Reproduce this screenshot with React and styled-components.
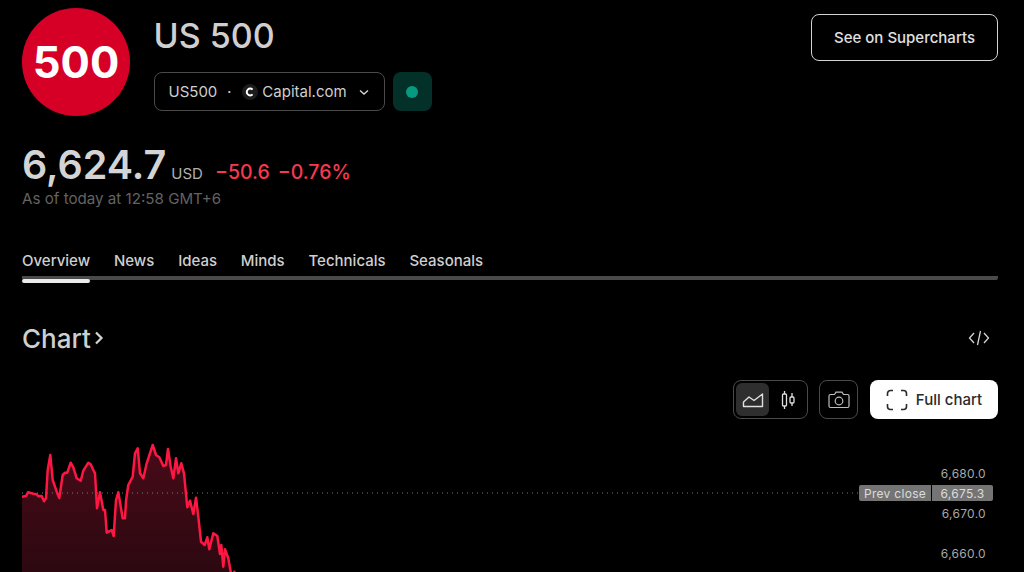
import styled, { createGlobalStyle } from 'styled-components';

const GlobalStyle = createGlobalStyle`
    html, body {
        margin: 0;
        background: #000;
        font-family: Inter, "Liberation Sans", sans-serif;
    }
    #root {
        height: 572px;
        overflow: hidden;
    }
`

const Page = styled.div`
    display: flex;
    flex-direction: column;
    padding: 8px 26px 0 22px;
    height: 564px;
    overflow: hidden;
    color: #d4d4d4;
`

const Header = styled.div`
    display: flex;
    align-items: flex-start;
    gap: 23.5px;
`

const Logo = styled.div`
    width: 108px;
    height: 108px;
    border-radius: 50%;
    background: #d60027;
    color: #fff;
    display: flex;
    align-items: center;
    justify-content: center;
    font-size: 43.5px;
    font-weight: 700;
    flex-shrink: 0;
`

const TitleColumn = styled.div`
    display: flex;
    flex-direction: column;
    flex: 1;
`

const Title = styled.h1`
    margin: 6px 0 0;
    font-size: 34px;
    line-height: 44px;
    font-weight: 500;
    color: #cfcfcf;
`

const SymbolRow = styled.div`
    display: flex;
    gap: 8px;
    margin-top: 14px;
`

const SymbolButton = styled.div`
    display: flex;
    align-items: center;
    box-sizing: border-box;
    width: 231px;
    height: 39px;
    padding: 0 14px;
    border: 1px solid #4a4a4a;
    border-radius: 8px;
    font-size: 15px;
    color: #cfcfcf;
`

const Dot = styled.span`
    margin: 0 11px 0 10px;
    font-size: 12px;
    font-weight: 700;
`

const ExchangeIcon = styled.span`
    width: 16px;
    height: 16px;
    margin-right: 4px;
    display: flex;
`

const Chevron = styled.span`
    margin-left: auto;
    display: flex;
`

const StatusBox = styled.div`
    width: 39px;
    height: 39px;
    border-radius: 8px;
    background: #04302a;
    display: flex;
    align-items: center;
    justify-content: center;
`

const StatusDot = styled.span`
    width: 12px;
    height: 12px;
    border-radius: 50%;
    background: #089981;
`

const OutlineButton = styled.div`
    box-sizing: border-box;
    width: 187px;
    height: 47px;
    margin-top: 6px;
    border: 1px solid #d4d4d4;
    border-radius: 8px;
    display: flex;
    align-items: center;
    justify-content: center;
    font-size: 15px;
    font-weight: 500;
    color: #e0e0e0;
`

const PriceRow = styled.div`
    display: flex;
    align-items: baseline;
    margin-top: 24px;
    height: 50px;
`

const Price = styled.span`
    font-size: 39.5px;
    line-height: 50px;
    font-weight: 600;
    color: #d4d4d4;
`

const Currency = styled.span`
    margin-left: 5px;
    font-size: 15px;
    color: #b0b0b0;
`

const Change = styled.span`
    margin-left: ${props => props.$gap}px;
    font-size: 19.5px;
    font-weight: 500;
    color: #f7394f;
`

const AsOf = styled.div`
    font-size: 15.15px;
    line-height: 20px;
    margin-top: -1px;
    color: #636363;
`

const Tabs = styled.div`
    display: flex;
    gap: 23.8px;
    margin-top: 40px;
    height: 30px;
    border-bottom: 4px solid #4a4a4a;
    border-radius: 2px;
`

const Tab = styled.div`
    position: relative;
    font-size: 15px;
    font-weight: 500;
    line-height: 24px;
    color: #cfcfcf;

    &::after {
        content: "";
        display: ${props => (props.$active ? 'block' : 'none')};
        position: absolute;
        left: 0;
        right: 0;
        top: 30px;
        height: 4px;
        border-radius: 2px;
        background: #ebebeb;
    }
`

const SectionHead = styled.div`
    display: flex;
    align-items: center;
    justify-content: space-between;
    margin-top: 41px;
    height: 40px;
`

const SectionTitle = styled.h2`
    display: flex;
    align-items: center;
    gap: 3px;
    margin: 0;
    font-size: 26px;
    font-weight: 500;
    color: #cfcfcf;
`

const EmbedIcon = styled.span`
    display: flex;
    margin-right: 8px;
`

const Toolbar = styled.div`
    display: flex;
    justify-content: flex-end;
    gap: 11px;
    margin-top: 24px;
`

const ToggleGroup = styled.div`
    box-sizing: border-box;
    display: flex;
    gap: 2px;
    width: 75px;
    height: 39px;
    padding: 2px;
    border: 1px solid #4a4a4a;
    border-radius: 8px;
`

const ToggleItem = styled.div`
    width: 33px;
    height: 33px;
    border-radius: 6px;
    background: ${props => (props.$active ? '#2e2e2e' : 'transparent')};
    display: flex;
    align-items: center;
    justify-content: center;
`

const IconButton = styled.div`
    box-sizing: border-box;
    width: 39px;
    height: 39px;
    border: 1px solid #4a4a4a;
    border-radius: 8px;
    display: flex;
    align-items: center;
    justify-content: center;
`

const FullChartButton = styled.div`
    box-sizing: border-box;
    width: 128px;
    height: 39px;
    margin-left: 1px;
    border-radius: 8px;
    background: #fff;
    color: #2a2a2a;
    display: flex;
    align-items: center;
    justify-content: center;
    gap: 8px;
    font-size: 15px;
    font-weight: 500;
`

const ChartArea = styled.div`
    position: relative;
    margin-top: 19px;
    height: 140px;
`

const ChartSvg = styled.svg`
    display: block;
`

const AxisLabel = styled.span`
    position: absolute;
    right: 12px;
    top: ${props => props.$top}px;
    font-size: 12px;
    line-height: 16px;
    letter-spacing: 0.3px;
    color: #a8a8a8;
`

const PrevClose = styled.div`
    position: absolute;
    right: 5px;
    top: 47px;
    display: flex;
    gap: 1px;
`

const PrevTag = styled.span`
    width: ${props => props.$width}px;
    height: 16px;
    background: #747474;
    border-radius: ${props => props.$radius};
    color: #dcdcdc;
    font-size: 12px;
    line-height: 17px;
    letter-spacing: 0.3px;
    text-align: center;
`

// traced from a 3x crop of the reference that starts at (0,430)
const traced = [
    [66, 200], [78, 198], [84, 187], [100, 191], [110, 193], [115, 199], [125, 198], [132, 214], [138, 205],
    [143, 120], [151, 75], [158, 150], [165, 170], [172, 190], [178, 204], [188, 135], [195, 128], [202, 128],
    [212, 98], [220, 112], [230, 145], [242, 152], [250, 122], [265, 98], [272, 103], [280, 120], [285, 130],
    [291, 235], [300, 187], [310, 240], [315, 240], [320, 308], [335, 300], [341, 318], [348, 210], [355, 187],
    [368, 265], [375, 265], [378, 213], [385, 165], [398, 140], [405, 70], [413, 55], [420, 130], [430, 145],
    [440, 100], [458, 45], [468, 75], [478, 82], [490, 108], [498, 105], [504, 57], [512, 110], [520, 145],
    [528, 85], [535, 130], [544, 100], [552, 130], [562, 232], [570, 212], [580, 252], [588, 203], [595, 260],
    [603, 335], [614, 345], [622, 322], [628, 358], [640, 310], [652, 318], [660, 372], [664, 345], [670, 410],
    [675, 358], [685, 385], [692, 426], [697, 440], [703, 425], [708, 438],
]

const toChart = ([x, y]) => [x / 3 - 22, y / 3 - 8]
const line = traced.map(toChart).map(p => p.map(n => n.toFixed(1)).join(',')).join(' ')
const area = `${line} 214,134 0,134`

function PriceChart() {
    return (
        <ChartSvg width="976" height="134" viewBox="0 0 976 134">
            <defs>
                <linearGradient id="fill" x1="0" y1="0" x2="0" y2="1">
                    <stop offset="0" stopColor="#470b18" />
                    <stop offset="1" stopColor="#2c0810" />
                </linearGradient>
            </defs>
            <polygon points={area} fill="url(#fill)" />
            <line x1="0" y1="55" x2="838" y2="55" stroke="#7a7a7a" strokeWidth="1" strokeDasharray="1 4" />
            <polyline points={line} fill="none" stroke="#ff1744" strokeWidth="2.5" strokeLinejoin="round" />
        </ChartSvg>
    )
}

export default function App() {
    return (
        <>
            <GlobalStyle />
            <Page>
                <Header>
                    <Logo>500</Logo>
                    <TitleColumn>
                        <Title>US 500</Title>
                        <SymbolRow>
                            <SymbolButton>
                                US500
                                <Dot>·</Dot>
                                <ExchangeIcon>
                                    <svg width="16" height="16" viewBox="0 0 16 16">
                                        <circle cx="8" cy="8" r="8" fill="#1c1c1c" />
                                        <path d="M10.6 5.6A3.4 3.4 0 1 0 10.6 10.4" fill="none" stroke="#fff" strokeWidth="2" />
                                    </svg>
                                </ExchangeIcon>
                                Capital.com
                                <Chevron>
                                    <svg width="12" height="12" viewBox="0 0 12 12">
                                        <path d="M2 4.5L6 8L10 4.5" fill="none" stroke="#d4d4d4" strokeWidth="1.4" />
                                    </svg>
                                </Chevron>
                            </SymbolButton>
                            <StatusBox><StatusDot /></StatusBox>
                        </SymbolRow>
                    </TitleColumn>
                    <OutlineButton>See on Supercharts</OutlineButton>
                </Header>

                <PriceRow>
                    <Price>6,624.7</Price>
                    <Currency>USD</Currency>
                    <Change $gap={12}>−50.6</Change>
                    <Change $gap={8}>−0.76%</Change>
                </PriceRow>
                <AsOf>As of today at 12:58 GMT+6</AsOf>

                <Tabs>
                    <Tab $active>Overview</Tab>
                    <Tab>News</Tab>
                    <Tab>Ideas</Tab>
                    <Tab>Minds</Tab>
                    <Tab>Technicals</Tab>
                    <Tab>Seasonals</Tab>
                </Tabs>

                <SectionHead>
                    <SectionTitle>
                        Chart
                        <svg width="10" height="16" viewBox="0 0 10 16">
                            <path d="M2 2.5L7.5 8L2 13.5" fill="none" stroke="#d4d4d4" strokeWidth="2.2" />
                        </svg>
                    </SectionTitle>
                    <EmbedIcon>
                        <svg width="22" height="18" viewBox="0 0 22 18">
                            <path d="M6 4L1.5 9L6 14M16 4L20.5 9L16 14M12.5 2L9.5 16" fill="none" stroke="#d4d4d4" strokeWidth="1.3" />
                        </svg>
                    </EmbedIcon>
                </SectionHead>

                <Toolbar>
                    <ToggleGroup>
                        <ToggleItem $active>
                            <svg width="22" height="16" viewBox="0 0 22 16">
                                <path d="M1.5 14.5V10L7 5L12 8.5L20.5 2V14.5Z" fill="none" stroke="#e0e0e0" strokeWidth="1.4" strokeLinejoin="round" />
                            </svg>
                        </ToggleItem>
                        <ToggleItem>
                            <svg width="16" height="20" viewBox="0 0 16 20">
                                <path d="M4.5 1V4M4.5 16V19M12 3V7M12 13V16" stroke="#e0e0e0" strokeWidth="1.3" />
                                <rect x="2.5" y="4" width="4" height="12" rx="1" fill="none" stroke="#e0e0e0" strokeWidth="1.3" />
                                <rect x="10" y="7" width="4" height="6" rx="1" fill="none" stroke="#e0e0e0" strokeWidth="1.3" />
                            </svg>
                        </ToggleItem>
                    </ToggleGroup>
                    <IconButton>
                        <svg width="22" height="18" viewBox="0 0 22 18">
                            <path d="M2.5 3.5H6.5L8 1.2H14L15.5 3.5H19.5A1.5 1.5 0 0 1 21 5V15A1.5 1.5 0 0 1 19.5 16.5H2.5A1.5 1.5 0 0 1 1 15V5A1.5 1.5 0 0 1 2.5 3.5Z" fill="none" stroke="#bdbdbd" strokeWidth="1.2" />
                            <circle cx="11" cy="10" r="3.8" fill="none" stroke="#bdbdbd" strokeWidth="1.2" />
                        </svg>
                    </IconButton>
                    <FullChartButton>
                        <svg width="22" height="22" viewBox="0 0 22 22">
                            <path d="M1.5 7V4.5A3 3 0 0 1 4.5 1.5H7M15 1.5H17.5A3 3 0 0 1 20.5 4.5V7M20.5 15V17.5A3 3 0 0 1 17.5 20.5H15M7 20.5H4.5A3 3 0 0 1 1.5 17.5V15" fill="none" stroke="#2a2a2a" strokeWidth="1.6" />
                        </svg>
                        Full chart
                    </FullChartButton>
                </Toolbar>

                <ChartArea>
                    <PriceChart />
                    <AxisLabel $top={28}>6,680.0</AxisLabel>
                    <PrevClose>
                        <PrevTag $width={72} $radius="2px 0 0 2px">Prev close</PrevTag>
                        <PrevTag $width={61} $radius="0 2px 2px 0">6,675.3</PrevTag>
                    </PrevClose>
                    <AxisLabel $top={68}>6,670.0</AxisLabel>
                    <AxisLabel $top={108}>6,660.0</AxisLabel>
                </ChartArea>
            </Page>
        </>
    )
}
